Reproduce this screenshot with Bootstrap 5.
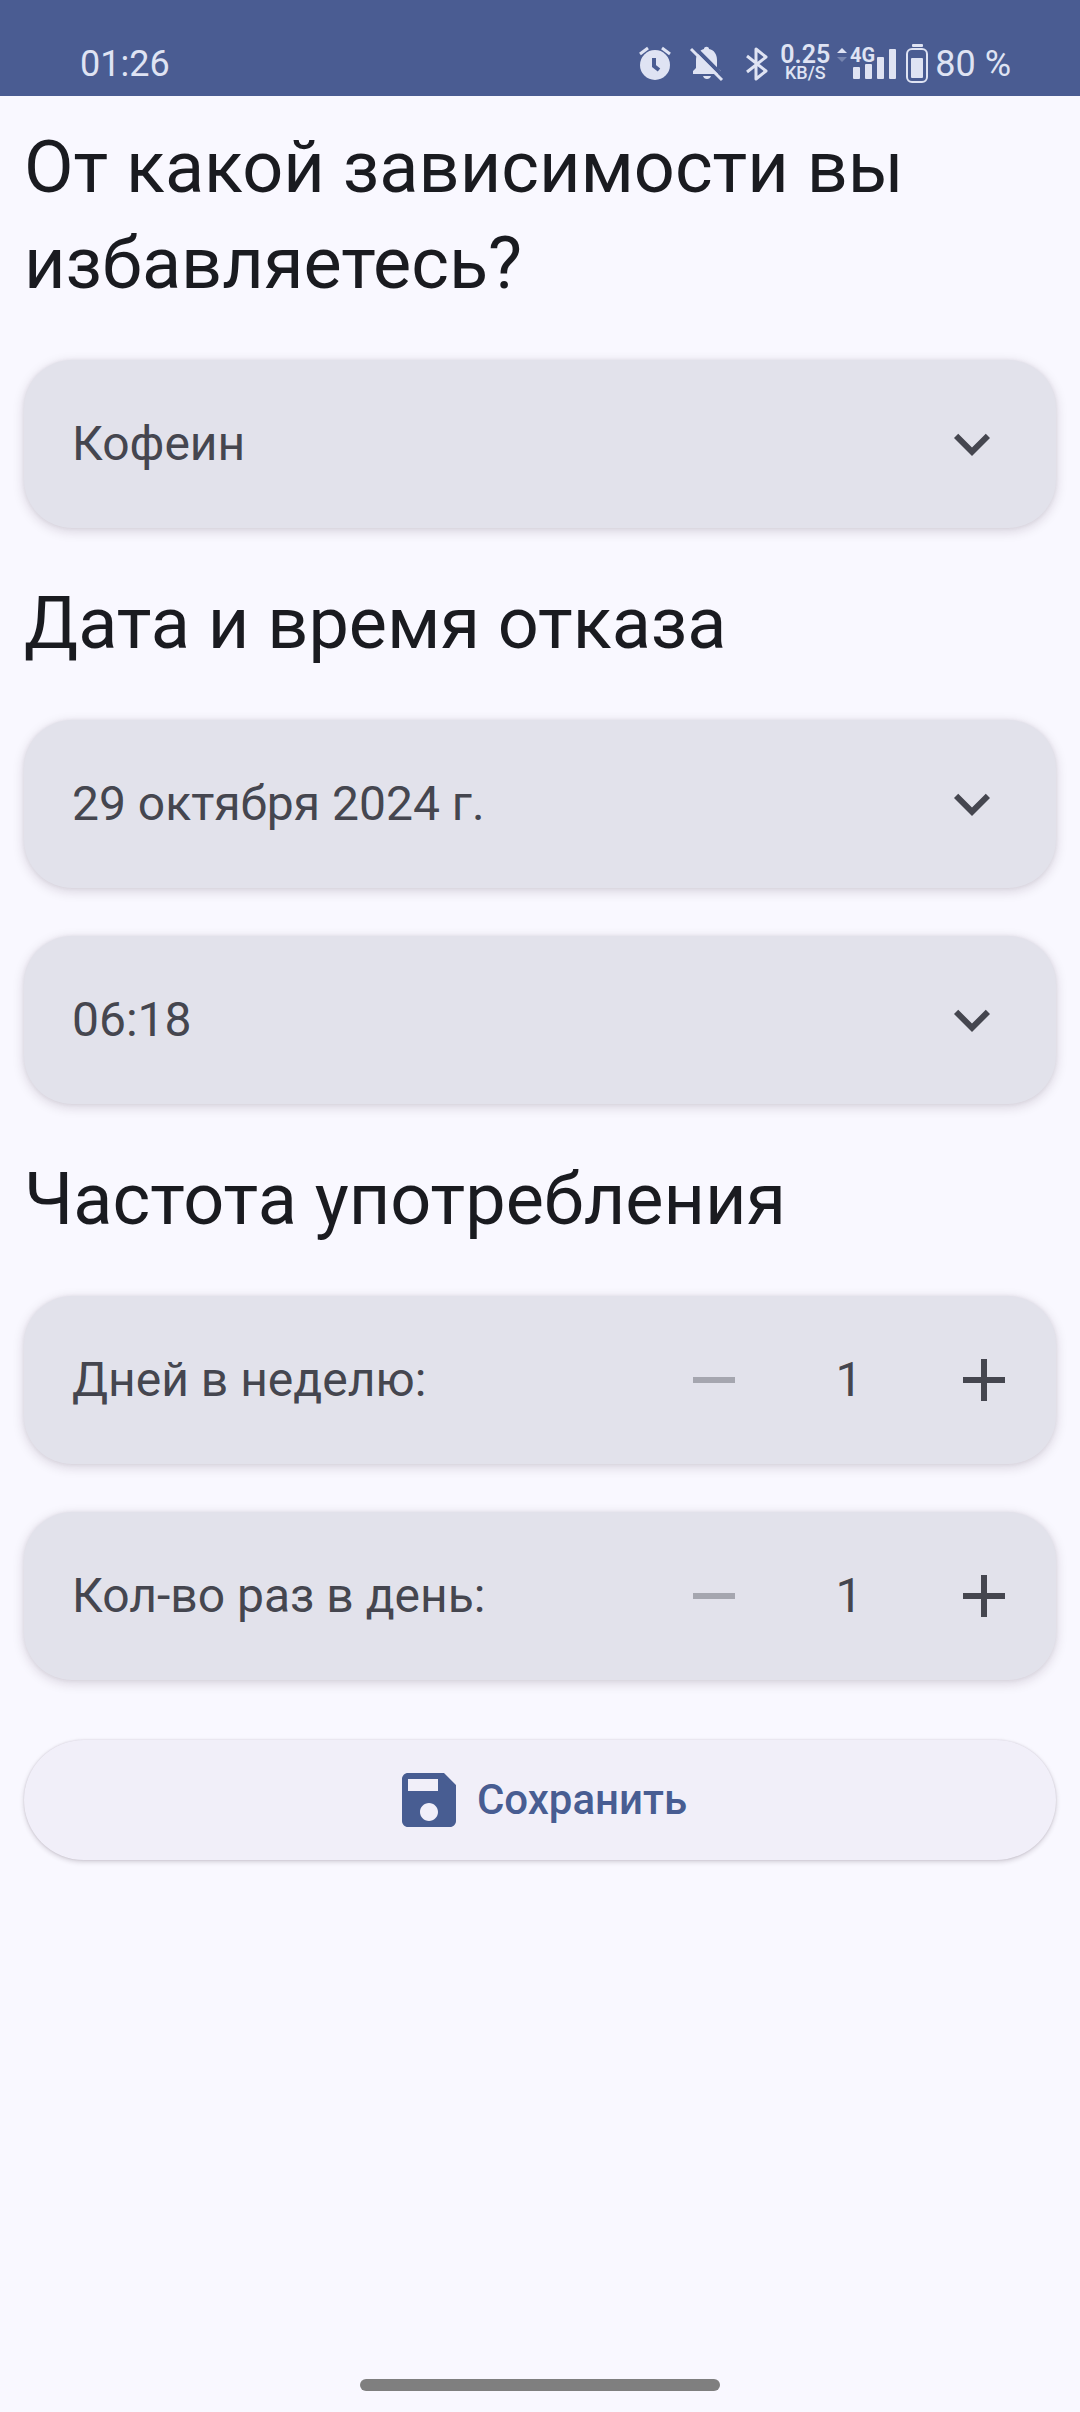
<!DOCTYPE html>
<html lang="ru">
<head>
<meta charset="utf-8">
<meta name="viewport" content="width=device-width, initial-scale=1">
<title>Дата и время отказа</title>
<link href="https://cdn.jsdelivr.net/npm/bootstrap@5.3.0/dist/css/bootstrap.min.css" rel="stylesheet">
<style>
  :root { --surface: #f9f8ff; --tile: #e2e2eb; --ink: #1a1b20; --ink-soft: #45464f; --brand: #4a5c92; --status: #dfe3f3; }
  body { background: var(--surface); color: var(--ink); font-family: Roboto, "Noto Sans", sans-serif; }
  .status-bar { height: 96px; padding: 32px 69px 0 80px; background: var(--brand); color: var(--status); font-size: 36px; line-height: 64px; }
  .status-icons { gap: 16px; }
  .status-tail { gap: 7px; }
  .net-speed { font-size: 25px; line-height: 18px; font-weight: 600; width: 50px; }
  .net-speed span { font-size: 18px; line-height: 18px; font-weight: 500; }
  .form-page { padding: 24px 24px 0; }
  .section-title { font-size: 72px; line-height: 96px; font-weight: 400; margin: 0; }
  .section-block { display: flex; flex-direction: column; gap: 48px; }
  .tile { height: 168px; border: 0; border-radius: 48px; background-color: var(--tile); color: var(--ink-soft);
    font-size: 48px; line-height: 72px; box-shadow: 0 3px 12px rgba(40, 20, 40, .17), 0 0 4px rgba(40, 20, 40, .06); }
  select.tile { padding: 0 144px 0 48px; background-position: right 48px center; background-size: 72px 72px;
    background-image: url("data:image/svg+xml,%3csvg xmlns='http://www.w3.org/2000/svg' viewBox='0 0 24 24'%3e%3cpath fill='%2345464f' d='M16.59 8.59 12 13.17 7.41 8.59 6 10l6 6 6-6z'/%3e%3c/svg%3e"); }
  .counter { padding-left: 48px; }
  .step-btn { width: 144px; height: 144px; padding: 36px; border: 0; border-radius: 72px; color: var(--ink-soft); line-height: 0; }
  .step-btn:disabled { border: 0; color: var(--ink-soft); opacity: .38; }
  .step-value { width: 126px; }
  .save-btn { height: 120px; margin-top: 12px; gap: 12px; border: 0; background: #f1eff9; color: #485d92; font-size: 42px; line-height: 60px; font-weight: 500;
    box-shadow: 0 2px 5px rgba(40, 20, 40, .18), 0 0 2px rgba(40, 20, 40, .15); }
  .save-btn:hover { background: #e8e7f4; color: #485d92; }
  .gesture-area { padding-bottom: 21px; }
  .gesture-bar { width: 33.3333%; height: 12px; background: #7f7f7f; }
</style>
</head>
<body class="d-flex flex-column min-vh-100">

<header class="status-bar d-flex justify-content-between align-items-center">
  <time>01:26</time>
  <div class="status-tail d-flex align-items-center">
    <div class="status-icons d-flex align-items-center">
      <svg width="36" height="36" viewBox="0 0 36 36" aria-hidden="true">
        <circle cx="18" cy="19" r="15" fill="currentColor"/>
        <path d="M3 8 11 2M33 8 25 2" stroke="currentColor" stroke-width="3"/>
        <path d="M17 12v8l5 4" fill="none" stroke="#4a5c92" stroke-width="4"/>
      </svg>
      <svg width="36" height="36" viewBox="0 0 36 36" aria-hidden="true">
        <path d="M8 28H4v-3l3-3v-8c0-6 4-10 8-11 0-3 5-3 5 0 5 1 8 5 8 11v8l4 3v3zM14 30h8q-1 3-4 3t-4-3z" fill="currentColor"/>
        <path d="M4 0 36 32" stroke="#4a5c92" stroke-width="4"/>
        <path d="M2 3 33 34" stroke="currentColor" stroke-width="3"/>
      </svg>
      <svg width="32" height="36" viewBox="0 0 32 36" aria-hidden="true">
        <path d="M6 10 25 25 15 33V3l10 8L6 26" fill="none" stroke="currentColor" stroke-width="3" stroke-linejoin="round"/>
      </svg>
    </div>
    <div class="net-speed d-flex flex-column align-items-center">0.25<span>KB/S</span></div>
    <svg width="62" height="48" viewBox="0 -6 62 48" aria-hidden="true">
      <path d="m0 7 5-5 5 5z" fill="currentColor"/>
      <path d="m0 11 5 5 5-5z" fill="currentColor" opacity=".3"/>
      <text x="13" y="16" font-size="20" font-weight="700" fill="currentColor">4G</text>
      <g fill="currentColor"><rect x="16" y="21" width="7" height="12" rx="1"/><rect x="28" y="18" width="7" height="15" rx="1"/><rect x="40" y="11" width="7" height="22" rx="1"/><rect x="52" y="3" width="7" height="30" rx="1"/></g>
    </svg>
    <svg width="22" height="40" viewBox="0 0 22 40" aria-hidden="true">
      <rect x="6" y="0" width="11" height="3" rx="1" fill="currentColor"/>
      <rect x="1" y="5" width="20" height="33" rx="5" fill="none" stroke="currentColor" stroke-width="2"/>
      <rect x="5" y="14" width="12" height="20" rx="1" fill="currentColor"/>
    </svg>
    <span>80 %</span>
  </div>
</header>

<main class="form-page">
  <form class="section-block">
    <label class="section-title" for="habit">От какой зависимости вы избавляетесь?</label>
    <select class="form-select tile" id="habit"><option>Кофеин</option></select>

    <h2 class="section-title">Дата и время отказа</h2>
    <select class="form-select tile" aria-label="Дата отказа"><option>29 октября 2024 г.</option></select>
    <select class="form-select tile" aria-label="Время отказа"><option>06:18</option></select>

    <h2 class="section-title">Частота употребления</h2>
    <div class="tile counter d-flex align-items-center">
      <label class="me-auto" for="days">Дней в неделю:</label>
      <button type="button" class="btn step-btn" aria-label="Меньше дней" disabled><svg width="72" height="72" viewBox="0 0 24 24" fill="currentColor"><path d="M19 13H5v-2h14z"/></svg></button>
      <output class="step-value text-center" id="days">1</output>
      <button type="button" class="btn step-btn" aria-label="Больше дней"><svg width="72" height="72" viewBox="0 0 24 24" fill="currentColor"><path d="M19 13h-6v6h-2v-6H5v-2h6V5h2v6h6z"/></svg></button>
    </div>
    <div class="tile counter d-flex align-items-center">
      <label class="me-auto" for="times">Кол-во раз в день:</label>
      <button type="button" class="btn step-btn" aria-label="Меньше раз" disabled><svg width="72" height="72" viewBox="0 0 24 24" fill="currentColor"><path d="M19 13H5v-2h14z"/></svg></button>
      <output class="step-value text-center" id="times">1</output>
      <button type="button" class="btn step-btn" aria-label="Больше раз"><svg width="72" height="72" viewBox="0 0 24 24" fill="currentColor"><path d="M19 13h-6v6h-2v-6H5v-2h6V5h2v6h6z"/></svg></button>
    </div>

    <button type="submit" class="btn save-btn rounded-pill d-flex align-items-center justify-content-center">
      <svg width="72" height="72" viewBox="0 0 24 24" fill="currentColor" aria-hidden="true"><path d="M17 3H5c-1.11 0-2 .9-2 2v14c0 1.1.89 2 2 2h14c1.1 0 2-.9 2-2V7l-4-4zm-5 16c-1.66 0-3-1.34-3-3s1.34-3 3-3 3 1.34 3 3-1.34 3-3 3zm3-10H5V5h10v4z"/></svg>
      Сохранить
    </button>
  </form>
</main>

<footer class="gesture-area mt-auto d-flex justify-content-center"><div class="gesture-bar rounded-pill"></div></footer>

<script src="https://cdn.jsdelivr.net/npm/bootstrap@5.3.0/dist/js/bootstrap.bundle.min.js"></script>
</body>
</html>
